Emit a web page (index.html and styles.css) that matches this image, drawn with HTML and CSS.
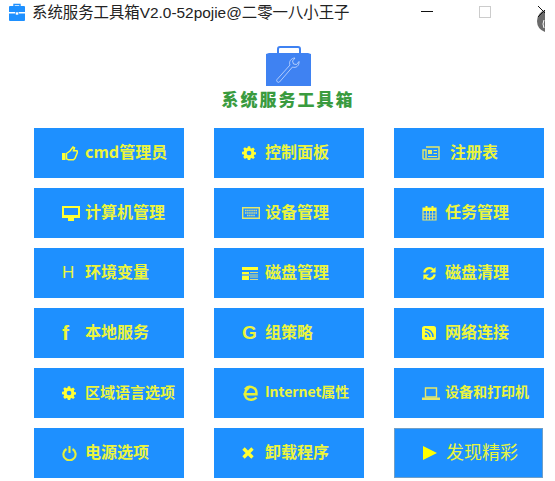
FILE: index.html
```html
<!DOCTYPE html>
<html>
<head>
  <meta charset="UTF-8">
  <title>系统服务工具箱</title>
  <link rel="stylesheet" href="styles.css">
</head>
<body>
  <div class="titlebar">
    <svg class="app-icon" viewBox="0 0 18 18">
      <path d="M6 3V1.500h6V3" fill="none" stroke="#1e90ff" stroke-width="1.400"/>
      <path d="M1 4a1 1 0 0 1 1-1h14a1 1 0 0 1 1 1v5H1z" fill="#1e90ff"/>
      <path d="M1 10.500h16V17a1 1 0 0 1-1 1H2a1 1 0 0 1-1-1z" fill="#1e90ff"/>
      <rect x="7.500" y="9" width="3" height="3" fill="#fff" stroke="#1e90ff" stroke-width=".6"/>
    </svg>
    <span class="app-title">系统服务工具箱V2.0-52pojie@二零一八小王子</span>
    <div class="win-btns">
      <span class="win-min"></span>
      <span class="win-max"></span>
      <svg class="win-close" width="8" height="27" viewBox="0 0 8 27">
        <path d="M8 4Q0 7 0 15Q0 23 8 26z" fill="#6a6a6a"/>
        <path d="M7 14q-2 4 0 8" fill="none" stroke="#fff"/>
        <path d="M1 0L8 7M1 11L8 4" stroke="#111" stroke-width="1"/>
      </svg>
    </div>
  </div>

  <div class="logo">
    <svg class="logo-icon" viewBox="0 0 45 40">
      <path d="M12 7V3a2 2 0 0 1 2-2h18a2 2 0 0 1 2 2v4" fill="none" stroke="#3f82f2" stroke-width="2"/>
      <path d="M0 8l3-1h39l3 1v32H0z" fill="#3f82f2"/>
      <path d="M11 33.500l13-14.500c-1.500-3 1-7 5-7l-2.500 3 1 3 3 .5 2.500-3c.5 4-3 7-6.500 5.500L13.500 36a1.800 1.800 0 0 1-2.500-2.500z" fill="none" stroke="#dfeaff" stroke-width=".7"/>
    </svg>
    <h1 class="logo-text">系统服务工具箱</h1>
  </div>

  <div class="grid">
    <a class="btn"><span class="ico"><svg width="16" height="15" viewBox="0 0 16 15"><path d="M0 7h3.500v7H0z" fill="#ffff33"/><path d="M4.500 7.500L8 5l3-4 1.500.8-1 3H15l.5 1.500-2.500 6-1.500 1.500H6.500l-2-1z" fill="none" stroke="#ffff33" stroke-width="1.500"/></svg></span><span class="label">cmd管理员</span></a>
    <a class="btn"><span class="ico"><svg width="14" height="14" viewBox="0 0 16 16"><path fill="#ffff33" fill-rule="evenodd" d="M6.500 0h3l.4 2.300 1.400.6 2-1.300 2.100 2.100-1.300 2 .6 1.400 2.300.4v3l-2.300.4-.6 1.400 1.300 2-2.100 2.100-2-1.300-1.400.6-.4 2.300h-3l-.4-2.300-1.400-.6-2 1.300L.5 13.800l1.300-2-.6-1.400L-1 10V7l2.300-.4.6-1.400-1.300-2L2.700 1.100l2 1.300 1.400-.6zM8 5.500a3 3 0 1 0 0 6 3 3 0 0 0 0-6z" transform="translate(.9 .4) scale(.89)"/></svg></span><span class="label">控制面板</span></a>
    <a class="btn"><span class="ico"><svg width="18" height="14" viewBox="0 0 18 14"><path d="M4 1h13v12H2a1 1 0 0 1-1-1V4h3v8" fill="none" stroke="#e6e86a" stroke-width="1.400"/><path d="M6 4h4v4H6z" fill="#e6e86a"/><path d="M11.500 4.500H15M11.500 7.500H15M6 10.500h9" stroke="#e6e86a"/></svg></span><span class="label gap-lg">注册表</span></a>

    <a class="btn"><span class="ico"><svg width="18" height="15" viewBox="0 0 18 15"><path d="M1 1h16v9H1z" fill="none" stroke="#ffff33" stroke-width="2"/><path d="M0 10h18v2H0zM6 12h6v3H6z" fill="#ffff33"/></svg></span><span class="label">计算机管理</span></a>
    <a class="btn"><span class="ico"><svg width="18" height="12" viewBox="0 0 18 12"><path d="M.7.700h16.600v10.600H.7z" fill="none" stroke="#e6e86a" stroke-width="1.400"/><path d="M3 3.500h12M3 6h12M5 8.500h8" stroke="#d6dc8a" stroke-width="1.300" stroke-dasharray="1.500 .6"/></svg></span><span class="label">设备管理</span></a>
    <a class="btn"><span class="ico"><svg width="15" height="16" viewBox="0 0 15 16"><path d="M1 3h13v12H1z" fill="none" stroke="#e6e86a" stroke-width="1.200"/><path d="M1 3h13v3H1zM3.500 1h2v3h-2zM9.500 1h2v3h-2z" fill="#ffff33"/><path d="M4.500 6v9M7.500 6v9M10.500 6v9M1 9h13M1 12h13" stroke="#d6dc8a"/></svg></span><span class="label">任务管理</span></a>

    <a class="btn"><span class="ico ico-h">H</span><span class="label">环境变量</span></a>
    <a class="btn"><span class="ico"><svg width="16" height="13" viewBox="0 0 16 13"><path d="M0 0h16v3H0zM0 5h7v2H0zM0 9h7v4H0z" fill="#ffff33"/><path d="M8 5.500h8M8 10h8M8 12.500h8M0 8h16" stroke="#d6dc8a"/></svg></span><span class="label">磁盘管理</span></a>
    <a class="btn"><span class="ico"><svg width="15" height="15" viewBox="0 0 16 16"><path d="M2.500 7a5.500 5.500 0 0 1 9.500-3M13.500 9a5.500 5.500 0 0 1-9.500 3" fill="none" stroke="#ffff33" stroke-width="2.400"/><path d="M14.500 1v6h-6zM1.500 15V9h6z" fill="#ffff33"/></svg></span><span class="label">磁盘清理</span></a>

    <a class="btn"><span class="ico ico-f">f</span><span class="label">本地服务</span></a>
    <a class="btn"><span class="ico ico-g">G</span><span class="label">组策略</span></a>
    <a class="btn"><span class="ico"><svg width="14" height="14" viewBox="0 0 14 14"><rect width="14" height="14" rx="2.500" fill="#ffff33"/><path d="M3 6a5 5 0 0 1 5 5M3 3a8 8 0 0 1 8 8" fill="none" stroke="#1e90ff" stroke-width="1.500"/><circle cx="4" cy="10" r="1.300" fill="#1e90ff"/></svg></span><span class="label">网络连接</span></a>

    <a class="btn"><span class="ico"><svg width="14" height="14" viewBox="0 0 16 16"><path fill="#ffff33" fill-rule="evenodd" d="M6.500 0h3l.4 2.300 1.400.6 2-1.300 2.100 2.100-1.300 2 .6 1.400 2.300.4v3l-2.300.4-.6 1.400 1.300 2-2.100 2.100-2-1.300-1.400.6-.4 2.300h-3l-.4-2.300-1.400-.6-2 1.300L.5 13.800l1.300-2-.6-1.400L-1 10V7l2.300-.4.6-1.400-1.300-2L2.700 1.100l2 1.300 1.400-.6zM8 5.500a3 3 0 1 0 0 6 3 3 0 0 0 0-6z" transform="translate(.9 .4) scale(.89)"/></svg></span><span class="label mid">区域语言选项</span></a>
    <a class="btn"><span class="ico"><svg width="16" height="16" viewBox="0 0 16 16"><path d="M1.500 9.200h13V8A6.300 6.300 0 0 0 3 4.500" fill="none" stroke="#e6f03a" stroke-width="2.400"/><path d="M14.500 12.500c-2.500 2.800-7.500 3-9.800.8C2.200 11 2 6 7 2.500" fill="none" stroke="#e6f03a" stroke-width="2.400"/></svg></span><span class="label small">Internet属性</span></a>
    <a class="btn"><span class="ico"><svg width="18" height="13" viewBox="0 0 18 13"><path d="M3.500 1h11v9h-11z" fill="none" stroke="#e6e86a" stroke-width="1.400"/><path d="M0 10.500h18V13H0z" fill="#e6e86a"/></svg></span><span class="label small">设备和打印机</span></a>

    <a class="btn"><span class="ico"><svg width="15" height="15" viewBox="0 0 16 16"><path d="M4.800 3.200a6.500 6.500 0 1 0 6.400 0" fill="none" stroke="#e6f03a" stroke-width="2.200"/><path d="M8 0v7.500" stroke="#e6f03a" stroke-width="2.200"/></svg></span><span class="label">电源选项</span></a>
    <a class="btn"><span class="ico"><svg width="12" height="12" viewBox="0 0 12 12"><path d="M1.500 1.500l9 9M10.500 1.500l-9 9" stroke="#ffff33" stroke-width="3.400"/></svg></span><span class="label">卸载程序</span></a>
    <a class="btn btn-play"><span class="ico"><svg width="14" height="14" viewBox="0 0 14 14"><path d="M0 0l14 7-14 7z" fill="#ffff00"/></svg></span><span class="label big">发现精彩</span></a>
  </div>
</body>
</html>
```

FILE: styles.css
```css
html, body {
  height: 100%;
}
body {
  margin: 0;
  background: #fff;
  font-family: "Noto Sans CJK SC", "Liberation Sans", sans-serif;
  overflow: hidden;
}
.titlebar {
  display: flex;
  align-items: flex-start;
  height: 26px;
  padding-left: 8px;
}
.app-icon {
  width: 18px;
  height: 18px;
  margin: 3px 6px 0 0;
}
.app-title {
  font-family: "Liberation Sans", "Noto Sans CJK SC", sans-serif;
  font-size: 15.400px;
  line-height: 26px;
  color: #222;
}
.win-btns {
  display: flex;
  align-items: flex-start;
  margin-left: auto;
  margin-right: 10px;
  padding-top: 6px;
}
.win-min {
  width: 12px;
  height: 1px;
  background: #111;
  margin: 5px 46px 0 0;
}
.win-max {
  width: 12px;
  height: 12px;
  border: 1px solid #ccc;
  box-sizing: border-box;
  margin-right: 46px;
}
.logo {
  display: flex;
  flex-direction: column;
  align-items: center;
  margin-top: 20px;
  margin-left: 21px;
}
.logo-icon {
  width: 45px;
  height: 40px;
}
.logo-text {
  margin: 2px 0 0;
  font-size: 17px;
  line-height: 22px;
  font-weight: 900;
  letter-spacing: 2px;
  color: #3a9b3f;
}
.grid {
  display: grid;
  grid-template-columns: repeat(3, 150px);
  grid-auto-rows: 50px;
  gap: 10px 30px;
  padding-left: 34px;
  margin-top: 18px;
}
.btn {
  display: flex;
  align-items: center;
  padding-left: 28px;
  background: #1e90ff;
  color: #ecf53c;
  font-size: 16px;
  font-weight: 700;
}
.ico {
  flex: none;
  display: flex;
  align-items: center;
  width: 23px;
}
.label {
  margin-bottom: 4px;
}
.ico-h {
  font: 400 17px "Liberation Sans", sans-serif;
}
.ico-f,
.ico-g {
  font: 700 19px "Liberation Sans", sans-serif;
}
.ico-f {
  font-size: 21px;
}
.gap-lg {
  margin-left: 5px;
}
.mid {
  font-size: 15px;
}
.small {
  font-size: 14px;
}
.big {
  font-size: 18px;
  font-weight: 400;
  color: #e8f53c;
}
.btn-play {
  width: 149px;
  box-sizing: border-box;
  border: 1px solid #6f9fc8;
}
```
